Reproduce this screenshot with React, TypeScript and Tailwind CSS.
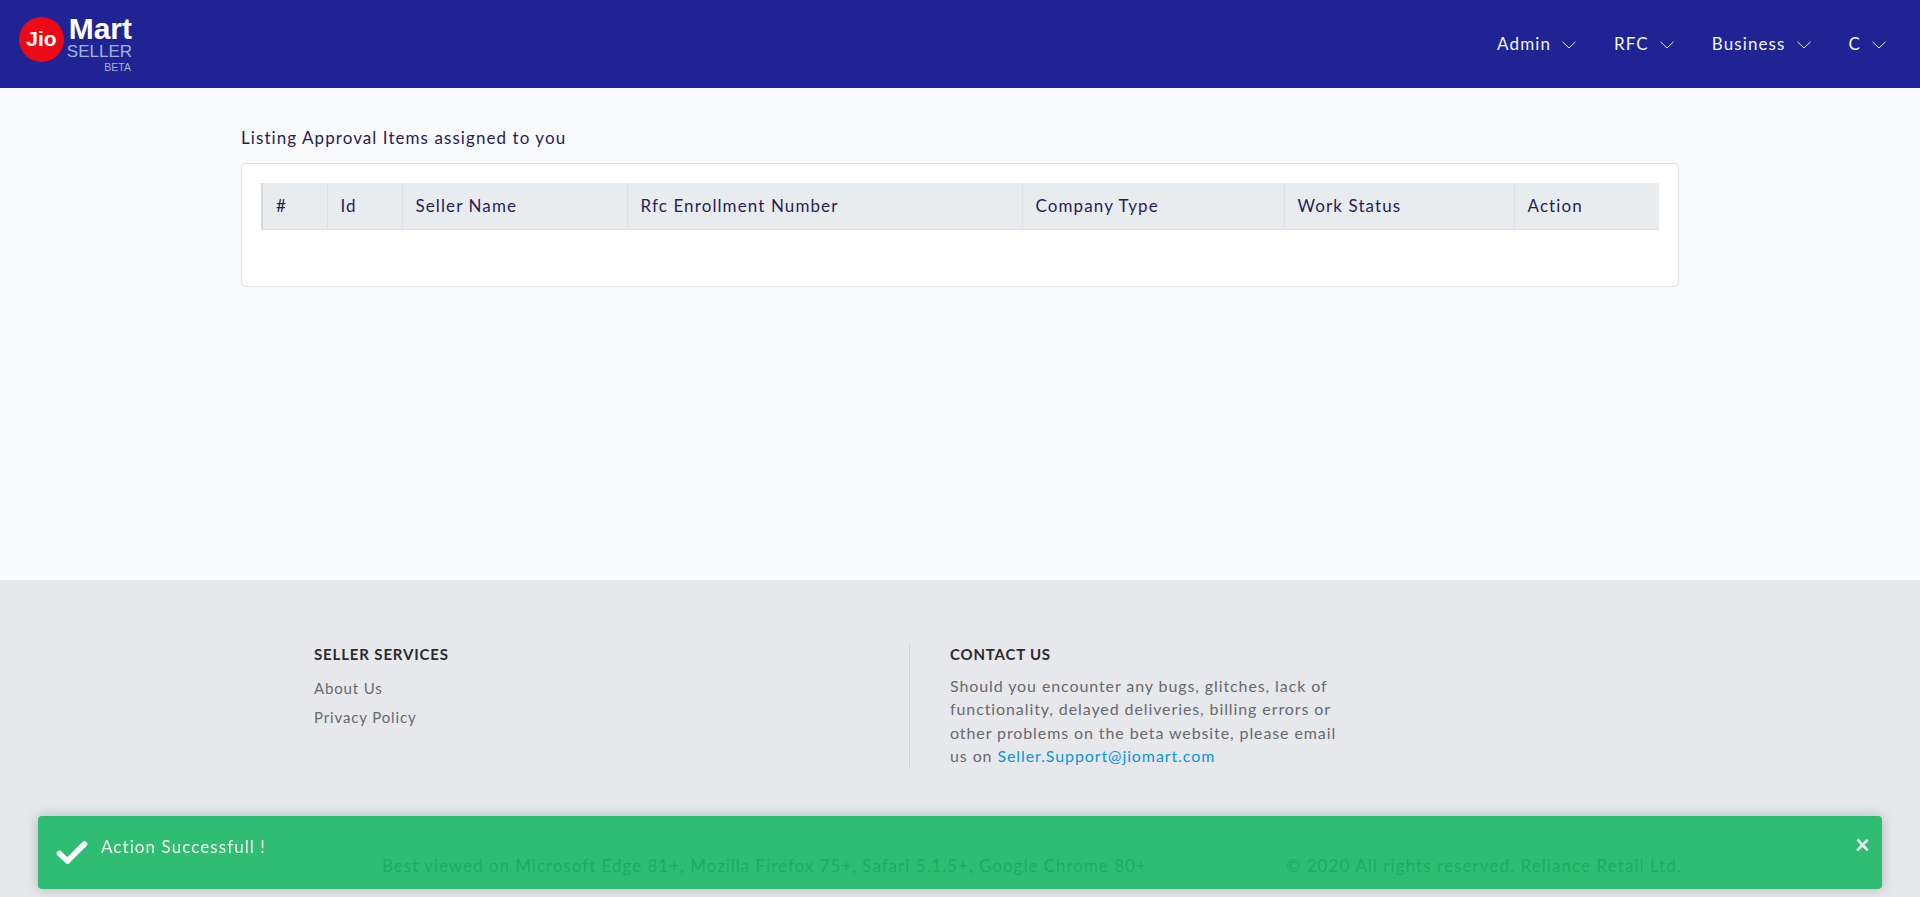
const navItems = ['Admin', 'RFC', 'Business', 'C']

const columns = [
  { label: '#', width: 'w-[65px]' },
  { label: 'Id', width: 'w-[75px]' },
  { label: 'Seller Name', width: 'w-[225px]' },
  { label: 'Rfc Enrollment Number', width: 'w-[395px]' },
  { label: 'Company Type', width: 'w-[262px]' },
  { label: 'Work Status', width: 'w-[230px]' },
  { label: 'Action', width: 'w-[145px]' },
]

const Chevron = () => (
  <svg width="14" height="8" viewBox="0 0 14 8" fill="none" className="mt-[3px]">
    <path d="M0.5 0.8 L7 7 L13.5 0.8" stroke="#e4e6f4" strokeWidth="1" />
  </svg>
)

const Logo = () => (
  <div className="flex items-start gap-[6px] font-['Liberation_Sans',sans-serif]">
    <div className="w-[45px] h-[45px] rounded-full bg-[#ee0a14] text-white font-bold text-[21px] flex items-center justify-center">
      Jio
    </div>
    <div className="flex flex-col items-end w-[62px] -mt-[1px]">
      <span className="text-white font-bold text-[30px] leading-[26px]">Mart</span>
      <span className="text-[#a3b3de] text-[17px] leading-[18px] mt-[1px]">SELLER</span>
      <span className="text-[#a3b3de] text-[10.5px] leading-[10px] mt-[1px] mr-[1px]">BETA</span>
    </div>
  </div>
)

const Header = () => (
  <header className="h-[88px] bg-[#1f2394] flex items-center justify-between pl-[19px] pr-[34px]">
    <Logo />
    <nav className="flex items-center gap-[38px] -mt-[1px]">
      {navItems.map((item) => (
        <div key={item} className="flex items-center gap-[11px] text-[#f2f4ff] text-[17px] tracking-[1.1px]">
          <span>{item}</span>
          <Chevron />
        </div>
      ))}
    </nav>
  </header>
)

const ApprovalTable = () => (
  <main className="h-[492px] bg-[#f9fafc] pt-[38px] pl-[241px] pr-[241px]">
    <h1 className="text-[17px] leading-[24px] tracking-[1.07px] text-[#2a1b57] font-normal mb-[13px]">
      Listing Approval Items assigned to you
    </h1>
    <div className="bg-white border border-[#dfe1e4] rounded-[5px] pt-[19px] px-[19px] h-[124px]">
      <table className="w-[1397px] table-fixed border-collapse">
        <thead>
          <tr className="h-[46px] bg-[#e9ecef]">
            {columns.map((col, i) => (
              <th
                key={col.label}
                className={`${col.width} ${i === 0 ? 'border-l-2 border-l-[#d5d9dd]' : 'border-l border-l-[#dee2e6]'} border-b border-b-[#d9dde1] px-[13px] text-left font-normal text-[17px] tracking-[1.1px] text-[#2a1b57]`}
              >
                {col.label}
              </th>
            ))}
          </tr>
        </thead>
      </table>
    </div>
  </main>
)

const Footer = () => (
  <footer className="h-[317px] bg-[#e7e8ec]">
    <div className="flex pt-[64px] pl-[314px]">
      <div className="w-[595px] h-[124px]">
        <h3 className="text-[15px] leading-[20px] font-bold tracking-[0.85px] text-[#2b2b2e]">SELLER SERVICES</h3>
        <ul className="mt-[10px] text-[15px] leading-[29px] tracking-[0.86px] text-[#68686e]">
          <li>About Us</li>
          <li>Privacy Policy</li>
        </ul>
      </div>
      <div className="border-l border-[#d2d3d7] pl-[40px] h-[124px] w-[470px]">
        <h3 className="text-[15px] leading-[20px] font-bold tracking-[0.8px] text-[#2b2b2e]">CONTACT US</h3>
        <p className="mt-[10px] text-[16px] leading-[23.3px] tracking-[0.9px] text-[#68686e]">
          Should you encounter any bugs, glitches, lack of
          <br />
          functionality, delayed deliveries, billing errors or
          <br />
          other problems on the beta website, please email
          <br />
          us on <a className="text-[#0a95dc]">Seller.Support@jiomart.com</a>
        </p>
      </div>
    </div>
    <div className="mt-[65px] ml-[293px] w-[1476px] border-t border-[#dcdde1]" />
    <div className="flex pt-[20px] pl-[382px] text-[17px] leading-[24px] text-[#68686e]">
      <span className="w-[904px] tracking-[0.98px]">Best viewed on Microsoft Edge 81+, Mozilla Firefox 75+, Safari 5.1.5+, Google Chrome 80+</span>
      <span className="tracking-[1.07px]">© 2020 All rights reserved. Reliance Retail Ltd.</span>
    </div>
  </footer>
)

const Toast = () => (
  <div className="fixed left-[38px] right-[38px] top-[816px] h-[73px] bg-[#10b65f]/[0.86] rounded-[4px] shadow-[0_0_14px_rgba(0,0,0,0.22)] flex items-start pl-[18px] pr-[12px]">
    <svg width="32" height="26" viewBox="0 0 32 26" fill="none" className="mt-[23px] shrink-0">
      <path d="M3.5 14.5 L11.5 22 L28.5 5" stroke="white" strokeWidth="5.5" strokeLinecap="round" strokeLinejoin="round" />
    </svg>
    <span className="ml-[13px] mt-[19px] text-[17px] leading-[24px] tracking-[1.07px] text-white/95">Action Successfull !</span>
    <span className="ml-auto mt-[14px] text-[26px] leading-[28px] font-bold text-[#eef8f1]">×</span>
  </div>
)

export default function App() {
  return (
    <div className="font-['Lato','Noto_Sans',sans-serif] min-h-screen overflow-hidden">
      <Header />
      <ApprovalTable />
      <Footer />
      <Toast />
    </div>
  )
}
